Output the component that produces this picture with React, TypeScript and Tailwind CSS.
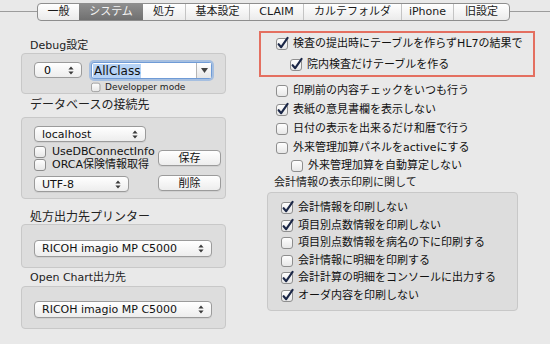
import React from "react";

const FONT = '"DejaVu Sans", "Noto Sans CJK JP", sans-serif';

function Arrows() {
  return (
    <svg width="6" height="9" viewBox="0 0 6 9" className="shrink-0">
      <path d="M3 0.5L5.6 3.6H0.4Z M3 8.5L0.4 5.4H5.6Z" fill="#3a3a3a" />
    </svg>
  );
}

function Check({ checked, size = 12 }: { checked?: boolean; size?: number }) {
  return (
    <svg width={size + 2} height={size + 1} viewBox="0 0 14 13" className="shrink-0 overflow-visible">
      <defs>
        <linearGradient id="cbg" x1="0" y1="0" x2="0" y2="1">
          <stop offset="0" stopColor="#ffffff" />
          <stop offset="1" stopColor="#e6e6e6" />
        </linearGradient>
      </defs>
      <rect x="0.5" y="1.5" width="11" height="11" rx="2.5" fill="url(#cbg)" stroke="#8e8e8e" />
      {checked && (
        <path
          d="M2.6 7.2 L5.2 10.2 L11.6 0.8"
          fill="none"
          stroke="#1b2747"
          strokeWidth="2.1"
          strokeLinecap="round"
          strokeLinejoin="round"
        />
      )}
    </svg>
  );
}

function Popup({ text, className }: { text: string; className: string }) {
  return (
    <div
      className={`flex items-center justify-between rounded-[4px] border border-[#9b9b9b] bg-gradient-to-b from-white to-[#ededed] pl-[7px] pr-[7px] text-[11px] leading-none text-[#111] shadow-[0_1px_0_rgba(0,0,0,0.06)] ${className}`}
    >
      <span>{text}</span>
      <Arrows />
    </div>
  );
}

function Button({ text }: { text: string }) {
  return (
    <div className="flex h-[16px] w-[63px] items-center justify-center rounded-[4px] border border-[#9b9b9b] bg-gradient-to-b from-white to-[#ededed] text-[11px] leading-none text-[#111] shadow-[0_1px_0_rgba(0,0,0,0.06)]">
      {text}
    </div>
  );
}

function Row({ checked, text, className = "" }: { checked?: boolean; text: string; className?: string }) {
  return (
    <div className={`flex items-center gap-[3px] text-[11px] leading-none text-[#111] ${className}`}>
      <Check checked={checked} />
      <span>{text}</span>
    </div>
  );
}

const tabs = [
  { t: "一般", w: "w-[41px]" },
  { t: "システム", w: "w-[64px]", sel: true },
  { t: "処方", w: "w-[42px]" },
  { t: "基本設定", w: "w-[64px]" },
  { t: "CLAIM", w: "w-[54px]" },
  { t: "カルテフォルダ", w: "w-[98px]" },
  { t: "iPhone", w: "w-[52px]" },
  { t: "旧設定", w: "w-[56px]" },
];

export default function App() {
  return (
    <div className="h-[344px] w-[550px] overflow-hidden bg-[#e9e9e9]" style={{ fontFamily: FONT }}>
      {/* Tab bar */}
      <div className="flex h-[23px] items-center">
        <div className="h-px w-[37px] bg-[#9c9c9c]" />
        <div className="flex h-[18px] w-[473px] overflow-hidden rounded-[4px] border border-[#8e8e8e] bg-gradient-to-b from-white to-[#ebebeb]">
          {tabs.map((tab, i) => (
            <div
              key={tab.t}
              className={`flex h-full items-center justify-center text-[11px] leading-none ${tab.w} ${
                tab.sel
                  ? "bg-gradient-to-b from-[#8e8e8e] to-[#707070] text-[#f3f3f3]"
                  : "text-[#1a1a1a]"
              } ${i > 0 && !tab.sel && !tabs[i - 1].sel ? "border-l border-[#c4c4c4]" : ""}`}
            >
              {tab.t}
            </div>
          ))}
        </div>
        <div className="h-px flex-1 bg-[#9c9c9c]" />
      </div>

      <div className="flex">
        {/* Left column */}
        <div className="ml-[21px] flex w-[205px] flex-col">
          <div className="mt-[16px] h-[14px] pl-[9px] text-[11px] leading-[14px] text-[#222]">Debug設定</div>
          <div className="h-[41px] rounded-[4px] border border-[#c8c8c8] bg-[#dddddd] pl-[12px] pt-[8px]">
            <div className="flex items-start">
              <div className="flex h-[16px] w-[48px] items-center justify-between rounded-[4px] border border-[#9b9b9b] bg-gradient-to-b from-white to-[#ededed] pl-[9px] pr-[7px] text-[11px] leading-none">
                <span>0</span>
                <Arrows />
              </div>
              <div className="ml-[9px] flex flex-col">
                <div className="flex h-[17px] w-[121px] items-stretch rounded-[3px] border border-[#6f9bd6] bg-white shadow-[0_0_0_2px_rgba(120,165,225,0.55)]">
                  <div className="flex flex-1 items-center pl-[1px]">
                    <span className="bg-[#b6d3f6] px-[1px] text-[12px] leading-[14px] text-[#111]">AllClass</span>
                  </div>
                  <div className="flex w-[15px] items-center justify-center border-l border-[#b5b5b5] bg-gradient-to-b from-white to-[#e6e6e6]">
                    <svg width="7" height="5" viewBox="0 0 7 5">
                      <path d="M0 0H7L3.5 5Z" fill="#444" />
                    </svg>
                  </div>
                </div>
                <div className="mt-[3px] flex items-center gap-[3px] text-[9px] leading-none text-[#222]">
                  <Check size={9} />
                  <span>Developper mode</span>
                </div>
              </div>
            </div>
          </div>

          <div className="h-[23px] pl-[9px] text-[12px] leading-[23px] text-[#222]">データベースの接続先</div>
          <div className="h-[82px] rounded-[4px] border border-[#c8c8c8] bg-[#dddddd] pl-[12px] pr-[4px] pt-[8px]">
            <Popup text="localhost" className="h-[16px] w-[112px]" />
            <div className="mt-[3px] flex">
              <div className="flex flex-col">
                <Row text="UseDBConnectInfo" className="h-[13px] gap-[4px]" />
                <Row text="ORCA保険情報取得" className="h-[13px] gap-[4px]" />
                <Popup text="UTF-8" className="mt-[5px] h-[16px] w-[95px]" />
              </div>
              <div className="ml-auto flex flex-col gap-[9px] pt-[5px]">
                <Button text="保存" />
                <Button text="削除" />
              </div>
            </div>
          </div>

          <div className="h-[25px] pl-[9px] pt-[11px] text-[12px] leading-[14px] text-[#222]">処方出力先プリンター</div>
          <div className="h-[44px] rounded-[4px] border border-[#c8c8c8] bg-[#dddddd] pl-[12px] pt-[15px]">
            <Popup text="RICOH imagio MP C5000" className="h-[17px] w-[178px]" />
          </div>

          <div className="h-[18px] pl-[9px] pt-[3px] text-[11px] leading-[14px] text-[#222]">Open Chart出力先</div>
          <div className="h-[43px] rounded-[4px] border border-[#c8c8c8] bg-[#dddddd] pl-[12px] pt-[14px]">
            <Popup text="RICOH imagio MP C5000" className="h-[17px] w-[178px]" />
          </div>
        </div>

        {/* Right column */}
        <div className="ml-[33px] flex w-[276px] flex-col">
          <div className="mt-[8px] h-[46px] border-2 border-[#e46f60] pl-[15px]">
            <Row checked text="検査の提出時にテーブルを作らずHL7の結果で" className="h-[21px]" />
            <Row checked text="院内検査だけテーブルを作る" className="h-[21px] pl-[14px]" />
          </div>
          <div className="mt-[3.5px] pl-[17px]">
            <Row text="印刷前の内容チェックをいつも行う" className="h-[19px]" />
            <Row checked text="表紙の意見書欄を表示しない" className="h-[19px]" />
            <Row text="日付の表示を出来るだけ和暦で行う" className="h-[19px]" />
            <Row text="外来管理加算パネルをactiveにする" className="h-[19px]" />
            <Row text="外来管理加算を自動算定しない" className="h-[17px] pl-[15px]" />
          </div>
          <div className="h-[18.5px] pl-[15px] text-[11px] leading-[18px] text-[#222]">会計情報の表示印刷に関して</div>
          <div className="ml-[8px] h-[119px] w-[251px] rounded-[4px] border border-[#c8c8c8] bg-[#dddddd] pl-[13px] pt-[6px]">
            <Row checked text="会計情報を印刷しない" className="h-[17.5px]" />
            <Row checked text="項目別点数情報を印刷しない" className="h-[17.5px]" />
            <Row text="項目別点数情報を病名の下に印刷する" className="h-[17.5px]" />
            <Row text="会計情報に明細を印刷する" className="h-[17.5px]" />
            <Row checked text="会計計算の明細をコンソールに出力する" className="h-[17.5px]" />
            <Row checked text="オーダ内容を印刷しない" className="h-[17.5px]" />
          </div>
        </div>
      </div>
    </div>
  );
}
